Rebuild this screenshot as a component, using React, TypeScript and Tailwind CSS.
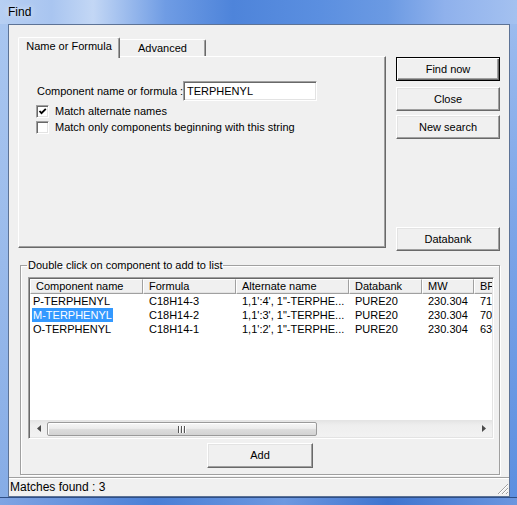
import React from "react";

function Btn({ children, def, className }: { children: React.ReactNode; def?: boolean; className?: string }) {
  const base = "flex items-center justify-center bg-[#f0f0f0] text-[11px] leading-[13px] text-black box-border";
  const look = def
    ? "border border-black shadow-[inset_1px_1px_0_#ffffff,inset_-1px_-1px_0_#696969,inset_-2px_-2px_0_#a0a0a0]"
    : "border border-t-white border-l-white border-r-[#696969] border-b-[#696969] shadow-[inset_-1px_-1px_0_#a0a0a0,inset_1px_1px_0_#e3e3e3]";
  return <div className={`${base} ${look} ${className ?? ""}`}>{children}</div>;
}

function Check({ checked }: { checked?: boolean }) {
  return (
    <div className="w-[13px] h-[13px] shrink-0 box-border bg-white border border-t-[#a0a0a0] border-l-[#a0a0a0] border-r-white border-b-white shadow-[inset_1px_1px_0_#696969,inset_-1px_-1px_0_#e3e3e3] flex items-center justify-center">
      {checked && (
        <svg width="9" height="9" viewBox="0 0 9 9">
          <path d="M1.5 4 L3.5 6.2 L7.8 1.8" fill="none" stroke="#000" strokeWidth="1.8" />
        </svg>
      )}
    </div>
  );
}

const cols = [
  { name: "Component name", w: 113 },
  { name: "Formula", w: 93 },
  { name: "Alternate name", w: 113 },
  { name: "Databank", w: 73 },
  { name: "MW", w: 52 },
  { name: "BP", w: 60 },
];

const rows = [
  ["P-TERPHENYL", "C18H14-3", "1,1':4', 1\"-TERPHE...", "PURE20", "230.304", "712.15"],
  ["M-TERPHENYL", "C18H14-2", "1,1':3', 1\"-TERPHE...", "PURE20", "230.304", "702.15"],
  ["O-TERPHENYL", "C18H14-1", "1,1':2', 1\"-TERPHE...", "PURE20", "230.304", "632.15"],
];

export default function App() {
  return (
    <div className="w-[517px] h-[505px] flex flex-col overflow-hidden font-['Liberation_Sans',Arial,sans-serif] text-black">
      {/* Title bar */}
      <div className="h-[24px] shrink-0 flex items-center pl-[8px] text-[12px] bg-[linear-gradient(90deg,#b7cff2_0%,#a9c5f0_10%,#c3d7f5_18%,#6f9ce4_32%,#4e84da_45%,#5b8fe0_62%,#6b9ae3_75%,#8fb1ec_86%,#a4c1f0_100%)]">
        <span className="[text-shadow:0_0_6px_rgba(255,255,255,0.9)]">Find</span>
      </div>

      {/* Middle */}
      <div className="flex h-[473px] shrink-0">
        <div className="w-[8px] bg-[linear-gradient(180deg,#a9c6f0_0%,#9dbdec_40%,#86ace6_100%)]" />
        <div className="w-[502px] box-border border border-[#5d7396] bg-[#f0f0f0] flex flex-col">
          {/* Top row */}
          <div className="h-[224px] shrink-0 flex items-start">
            {/* Tab control */}
            <div className="ml-[9px] pt-[12px] w-[368px] flex flex-col">
              <div className="h-[19px] flex items-end relative z-10">
                <div className="w-[102px] h-[21px] mb-[-2px] box-border bg-[#f0f0f0] border-t border-l border-r border-t-white border-l-white border-r-[#696969] rounded-t-[2px] shadow-[inset_-1px_0_0_#a0a0a0] flex justify-center pt-[2px] text-[11px] leading-[13px] whitespace-nowrap">
                  Name or Formula
                </div>
                <div className="w-[86px] h-[17px] box-border bg-[#f0f0f0] border-t border-r border-t-white border-r-[#696969] rounded-tr-[2px] shadow-[inset_-1px_0_0_#a0a0a0] flex justify-center pt-[2px] text-[11px] leading-[13px]">
                  Advanced
                </div>
              </div>
              <div className="h-[192px] w-[368px] box-border border border-t-white border-l-white border-r-[#696969] border-b-[#696969] shadow-[inset_-1px_-1px_0_#a0a0a0] pl-[18px] pt-[24px] flex flex-col text-[11px] leading-[13px]">
                <div className="h-[20px] flex items-center">
                  <span className="w-[146px] shrink-0 whitespace-nowrap">Component name or formula :</span>
                  <div className="w-[134px] h-[20px] box-border bg-white border border-t-[#a0a0a0] border-l-[#a0a0a0] border-r-white border-b-white shadow-[inset_1px_1px_0_#696969,inset_-1px_-1px_0_#e3e3e3] flex items-center pl-[3px]">
                    TERPHENYL
                  </div>
                </div>
                <div className="mt-[2px] h-[16px] flex items-center ml-[-1px]">
                  <Check checked />
                  <span className="ml-[6px] whitespace-nowrap">Match alternate names</span>
                </div>
                <div className="h-[16px] flex items-center ml-[-1px]">
                  <Check />
                  <span className="ml-[6px] whitespace-nowrap">Match only components beginning with this string</span>
                </div>
              </div>
            </div>

            {/* Buttons column */}
            <div className="ml-[10px] pt-[32px] w-[104px] flex flex-col">
              <Btn def className="h-[24px]">Find now</Btn>
              <Btn className="h-[24px] mt-[6px]">Close</Btn>
              <Btn className="h-[24px] mt-[4px]">New search</Btn>
              <Btn className="h-[24px] mt-[88px]">Databank</Btn>
            </div>
          </div>

          {/* Group box */}
          <fieldset className="mt-[10px] ml-[11px] w-[480px] h-[216px] box-border border border-[#a0a0a0] shadow-[1px_1px_0_#ffffff,inset_1px_1px_0_#ffffff] shrink-0">
            <legend className="ml-[6px] px-[1px] text-[11px] leading-[13px]">Double click on component to add to list</legend>
            <div className="mt-[5px] ml-[7px] w-[466px] h-[162px] box-border bg-white border border-t-[#a0a0a0] border-l-[#a0a0a0] border-r-white border-b-white shadow-[inset_1px_1px_0_#696969,inset_-1px_-1px_0_#e3e3e3] p-[1px] flex flex-col">
              <div className="flex-1 flex flex-col overflow-hidden text-[11px]">
                {/* header */}
                <div className="h-[15px] flex shrink-0 bg-[#f0f0f0]">
                  {cols.map((c) => (
                    <div
                      key={c.name}
                      style={{ width: c.w }}
                      className="shrink-0 h-[15px] box-border border border-t-white border-l-white border-r-[#a0a0a0] border-b-[#a0a0a0] shadow-[inset_0_-1px_0_#e3e3e3] pl-[5px] leading-[13px] whitespace-nowrap overflow-hidden"
                    >
                      {c.name}
                    </div>
                  ))}
                </div>
                {/* rows */}
                <div className="flex-1">
                  {rows.map((r, ri) => (
                    <div key={ri} className="h-[14px] flex">
                      {r.map((v, ci) => (
                        <div
                          key={ci}
                          style={{ width: cols[ci].w }}
                          className={`shrink-0 h-[14px] leading-[14px] whitespace-nowrap overflow-hidden ${ci === 0 ? "pl-[2px]" : "pl-[6px]"}`}
                        >
                          {ci === 0 ? (
                            <span className={`inline-block px-[1px] h-[14px] ${ri === 1 ? "bg-[#3399ff] text-white" : ""}`}>{v}</span>
                          ) : (
                            v
                          )}
                        </div>
                      ))}
                    </div>
                  ))}
                </div>
              </div>
              {/* horizontal scrollbar */}
              <div className="h-[17px] shrink-0 flex bg-[linear-gradient(180deg,#e3e3e3_0%,#eeeeee_30%,#f2f2f2_100%)]">
                <div className="w-[17px] flex items-center justify-center">
                  <svg width="4" height="7" viewBox="0 0 4 7">
                    <path d="M4 0 L0 3.5 L4 7 Z" fill="#4a4a4a" />
                  </svg>
                </div>
                <div className="flex-1 flex items-stretch py-[2px] pb-[1px]">
                  <div className="w-[270px] box-border rounded-[2px] border border-[#9a9a9a] bg-[linear-gradient(180deg,#f6f6f6_0%,#ececec_45%,#dcdcdc_55%,#d3d3d3_100%)] shadow-[inset_1px_1px_0_#ffffff] flex items-center justify-center">
                    <svg width="8" height="7" viewBox="0 0 8 7">
                      <rect x="0" y="0" width="1" height="7" fill="#555" />
                      <rect x="1" y="0" width="1" height="7" fill="#fff" />
                      <rect x="3" y="0" width="1" height="7" fill="#555" />
                      <rect x="4" y="0" width="1" height="7" fill="#fff" />
                      <rect x="6" y="0" width="1" height="7" fill="#555" />
                      <rect x="7" y="0" width="1" height="7" fill="#fff" />
                    </svg>
                  </div>
                </div>
                <div className="w-[17px] flex items-center justify-center">
                  <svg width="4" height="7" viewBox="0 0 4 7">
                    <path d="M0 0 L4 3.5 L0 7 Z" fill="#4a4a4a" />
                  </svg>
                </div>
              </div>
            </div>
            <Btn className="mt-[4px] ml-[186px] w-[106px] h-[25px]">Add</Btn>
          </fieldset>

          {/* Status bar */}
          <div className="mt-[2px] h-[19px] shrink-0 border-t border-[#a0a0a0] shadow-[inset_0_1px_0_#ffffff] flex items-center justify-between pl-[1px]">
            <span className="text-[12px] leading-[14px]">Matches found : 3</span>
            <svg width="13" height="13" viewBox="0 0 13 13" className="self-end mb-[1px]">
              <path d="M12 2 L2 12 M12 6 L6 12 M12 10 L10 12" stroke="#a0a0a0" strokeWidth="1" />
              <path d="M12 3 L3 12 M12 7 L7 12 M12 11 L11 12" stroke="#ffffff" strokeWidth="1" />
            </svg>
          </div>
        </div>
        <div className="w-[7px] bg-[linear-gradient(180deg,#9bbbee_0%,#7ea6e8_40%,#5d8fe0_100%)]" />
      </div>

      {/* Bottom frame */}
      <div className="h-[8px] shrink-0 border-t border-[#2f4f86] bg-[linear-gradient(90deg,#7fa4e3_0%,#4a7fd6_30%,#6d98e0_55%,#3f74cf_75%,#6b96df_100%)]" />
    </div>
  );
}
